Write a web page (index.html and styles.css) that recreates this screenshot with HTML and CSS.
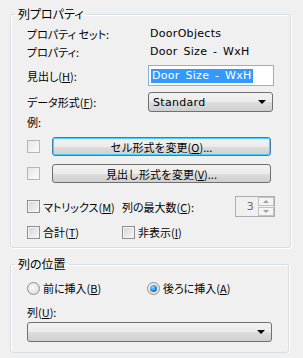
FILE: index.html
```html
<!DOCTYPE html>
<html lang="ja">
<head>
    <meta charset="UTF-8">
    <title>列プロパティ</title>
    <link rel="stylesheet" href="styles.css">
</head>
<body>
    <div class="panel">
        <fieldset class="group group-props">
            <legend>列プロパティ</legend>

            <div class="row row-text">
                <span class="label">プロパティ セット:</span>
                <span class="latin value">DoorObjects</span>
            </div>
            <div class="row row-text row-tight">
                <span class="label">プロパティ:</span>
                <span class="latin value">Door Size - WxH</span>
            </div>
            <div class="row row-heading">
                <span class="label">見出し(<u>H</u>):</span>
                <div class="textbox"><span class="selected latin">Door Size - WxH</span></div>
            </div>
            <div class="row row-format">
                <span class="label">データ形式(<u>F</u>):</span>
                <div class="combo combo-format">
                    <span class="combo-text latin">Standard</span>
                    <span class="combo-arrow"></span>
                </div>
            </div>
            <div class="row row-text row-tight">
                <span class="label">例:</span>
            </div>
            <div class="row row-button row-cell">
                <span class="swatch"></span>
                <button class="btn btn-focused">セル形式を変更(<u>O</u>)...</button>
            </div>
            <div class="row row-button row-head">
                <span class="swatch"></span>
                <button class="btn">見出し形式を変更(<u>V</u>)...</button>
            </div>
            <div class="row row-matrix">
                <label class="check check-first"><span class="box"></span>マトリックス(<u>M</u>)</label>
                <span class="max-label">列の最大数(<u>C</u>):</span>
                <div class="spin">
                    <span class="spin-value latin">3</span>
                    <span class="spin-buttons">
                        <span class="spin-btn"><span class="tri-up"></span></span>
                        <span class="spin-btn"><span class="tri-down"></span></span>
                    </span>
                </div>
            </div>
            <div class="row row-text row-total">
                <label class="check check-first"><span class="box"></span>合計(<u>T</u>)</label>
                <label class="check"><span class="box"></span>非表示(<u>I</u>)</label>
            </div>
        </fieldset>

        <fieldset class="group group-position">
            <legend>列の位置</legend>

            <div class="row row-text row-radios">
                <label class="radio radio-first"><span class="dot"></span>前に挿入(<u>B</u>)</label>
                <label class="radio"><span class="dot dot-on"></span>後ろに挿入(<u>A</u>)</label>
            </div>
            <div class="row row-text row-col">
                <span class="label">列(<u>U</u>):</span>
            </div>
            <div class="row row-column">
                <div class="combo combo-wide">
                    <span class="combo-text"></span>
                    <span class="combo-arrow"></span>
                </div>
            </div>
        </fieldset>
    </div>
</body>
</html>
```

FILE: styles.css
```css
body {
    margin: 0;
    background-color: #f0f0f0;
    font-family: "Noto Sans CJK JP", "Noto Sans", sans-serif;
    font-size: 11px;
    color: #000;
    font-feature-settings: "palt" 1;
}

.latin {
    font-family: "DejaVu Sans", "Liberation Sans", sans-serif;
    font-size: 11px;
    font-feature-settings: normal;
    letter-spacing: 0.3px;
    word-spacing: 2px;
}

.value {
    padding-left: 2px;
}

u {
    text-decoration: underline;
    text-underline-offset: 1px;
}

.panel {
    padding: 6px 0 0 10px;
    width: 279px;
}

.group {
    margin: 0;
    padding: 4px 16px 7px 16px;
    border: 1px solid #d5dfe5;
    border-radius: 3px;
    box-shadow: inset 1px 1px 0 #fff, 1px 1px 0 #fff;
}

.group legend {
    margin-left: -12px;
    padding: 0 3px;
    height: 16px;
    line-height: 16px;
    font-size: 12px;
}

.group-position {
    margin-top: 8px;
    padding-top: 8px;
    padding-bottom: 10px;
}

.row {
    display: flex;
    align-items: center;
}

.row-text {
    height: 16px;
    line-height: 16px;
}

.row-tight {
    margin-top: 2px;
}

.label {
    width: 121px;
    flex: none;
}

.row-heading {
    margin-top: 5px;
    height: 21px;
}

.textbox {
    width: 122px;
    height: 19px;
    border: 1px solid #84b4dc;
    background-color: #fff;
    display: flex;
    align-items: center;
    padding-left: 2px;
}

.selected {
    background-color: #3399ff;
    color: #fff;
    line-height: 14px;
    padding: 0 1px;
}

.row-format {
    margin-top: 6px;
    height: 20px;
}

.combo {
    box-sizing: border-box;
    height: 20px;
    border: 1px solid #707070;
    border-radius: 3px;
    background: linear-gradient(#f2f2f2 0%, #ebebeb 50%, #dddddd 51%, #cfcfcf 100%);
    display: flex;
    align-items: center;
    padding: 0 6px 0 4px;
}

.combo-format {
    width: 125px;
}

.combo-wide {
    width: 245px;
}

.combo-text {
    flex: 1;
}

.combo-arrow {
    width: 0;
    height: 0;
    border-left: 4px solid transparent;
    border-right: 4px solid transparent;
    border-top: 4px solid #000;
}

.row-button {
    height: 19px;
}

.row-cell {
    margin-top: 7px;
}

.row-head {
    margin-top: 8px;
}

.swatch {
    box-sizing: border-box;
    width: 13px;
    height: 13px;
    border: 1px solid #b6b6b6;
    background: linear-gradient(135deg, #e6e6e6, #fbfbfb);
    flex: none;
    margin-right: 12px;
}

.btn {
    box-sizing: border-box;
    width: 219px;
    height: 19px;
    margin: 0;
    padding: 0;
    border: 1px solid #707070;
    border-radius: 3px;
    background: linear-gradient(#f2f2f2 0%, #ebebeb 50%, #dddddd 51%, #cfcfcf 100%);
    font-family: inherit;
    font-size: 11px;
    line-height: 16px;
    color: #000;
}

.btn-focused {
    border-color: #3c7fb1;
    box-shadow: inset 0 0 0 1px #48d0ff;
}

.row-matrix {
    margin-top: 13px;
    height: 21px;
}

.check,
.radio {
    display: flex;
    align-items: center;
    white-space: nowrap;
}

.check-first {
    width: 95px;
    flex: none;
}

.box {
    box-sizing: border-box;
    width: 13px;
    height: 13px;
    border: 1px solid #8e8f8f;
    background: linear-gradient(135deg, #d4d4d4, #f7f7f7);
    box-shadow: inset 0 0 0 1px #f4f4f4;
    margin-right: 3px;
    flex: none;
}

.max-label {
    flex: 1;
}

.spin {
    box-sizing: border-box;
    width: 40px;
    height: 21px;
    margin-right: -1px;
    border: 1px solid #adadad;
    display: flex;
    align-items: center;
}

.spin-value {
    flex: 1;
    text-align: right;
    padding-right: 4px;
    color: #6d6d6d;
}

.spin-buttons {
    display: flex;
    flex-direction: column;
    gap: 1px;
    width: 16px;
    height: 19px;
}

.spin-btn {
    box-sizing: border-box;
    flex: 1;
    border: 1px solid #c2c2c2;
    background-color: #f4f4f4;
    display: flex;
    align-items: center;
    justify-content: center;
}

.tri-up,
.tri-down {
    width: 0;
    height: 0;
    border-left: 3px solid transparent;
    border-right: 3px solid transparent;
}

.tri-up {
    border-bottom: 3px solid #a0a0a0;
}

.tri-down {
    border-top: 3px solid #a0a0a0;
}

.row-total {
    margin-top: 7px;
}

.radio-first {
    width: 120px;
    flex: none;
}

.dot {
    box-sizing: border-box;
    width: 13px;
    height: 13px;
    border-radius: 50%;
    border: 1px solid #8e8f8f;
    background: radial-gradient(circle at 40% 40%, #fafafa, #d6d6d6);
    margin-right: 3px;
    flex: none;
    display: flex;
    align-items: center;
    justify-content: center;
}

.dot-on::after {
    content: "";
    width: 7px;
    height: 7px;
    border-radius: 50%;
    background: radial-gradient(circle at 40% 35%, #8fd6ff, #1a7fcf 60%, #0d4f8c);
}

.row-col {
    margin-top: 8px;
}

.row-column {
    margin-top: 2px;
}
```
